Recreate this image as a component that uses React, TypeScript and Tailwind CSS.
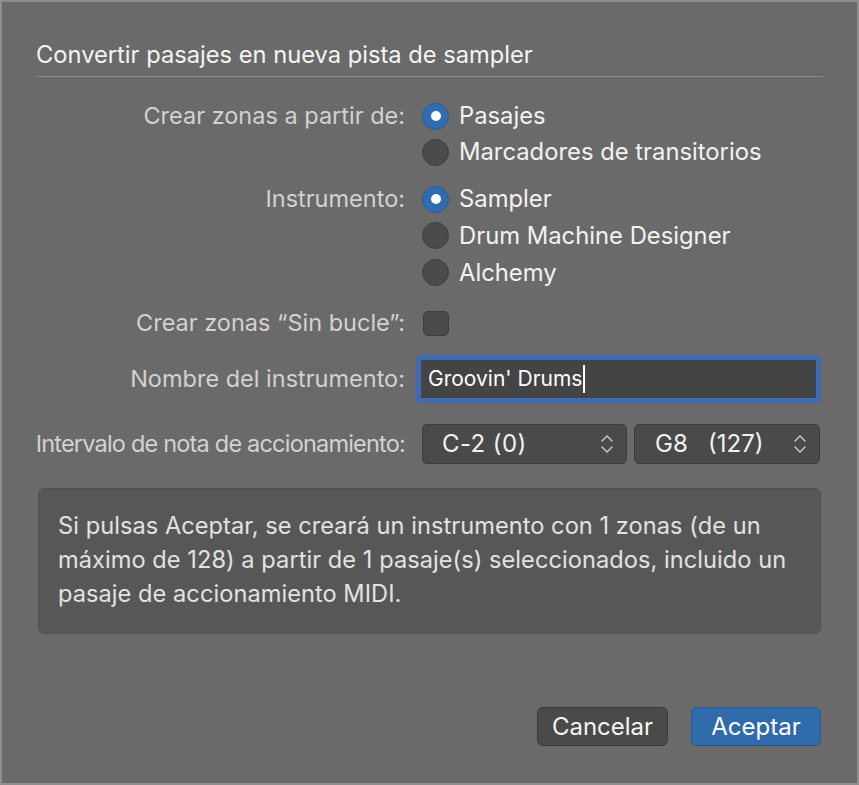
import React from "react";

const font = { fontFamily: "Inter, 'Liberation Sans', sans-serif" };

const Radio = ({ checked, label, h = "h-[36px]" }: { checked?: boolean; label: string; h?: string }) => (
  <div className={`flex ${h} items-center gap-[10px]`}>
    {checked ? (
      <div className="flex h-[27px] w-[27px] items-center justify-center rounded-full border border-[#285d99] bg-[#2f6cb0]">
        <div className="h-[10px] w-[10px] rounded-full bg-white" />
      </div>
    ) : (
      <div className="h-[27px] w-[27px] rounded-full border border-[#404040] bg-[#4b4b4b]" />
    )}
    <span className="text-[23.8px] text-[#f2f2f2]">{label}</span>
  </div>
);

const Chevrons = () => (
  <svg width="14" height="22" viewBox="0 0 14 22" fill="none" stroke="#cfcfcf" strokeWidth="1.4" strokeLinecap="round" strokeLinejoin="round">
    <path d="M2 8 L7 3 L12 8" />
    <path d="M2 14 L7 19 L12 14" />
  </svg>
);

const Label = ({ children, tight }: { children: React.ReactNode; tight?: boolean }) => (
  <div
    className={`w-[403px] shrink-0 whitespace-nowrap text-right text-[23.5px] text-[#d2d2d2] ${tight ? "tracking-[-0.8px]" : ""}`}
  >
    {children}
  </div>
);

export default function App() {
  return (
    <div
      style={font}
      className="flex h-[785px] w-[859px] flex-col border-[2px] border-[#8e8e8e] bg-[#6a6a6a]"
    >
      <div className="mx-[34px] mt-[39px] border-b border-[#8a8a8a] pb-[7px] text-[23.7px] leading-[28px] text-[#f4f4f4]">
        Convertir pasajes en nueva pista de sampler
      </div>

      <div className="mt-[21px] flex flex-col">
        <div className="flex">
          <Label><div className="h-[36px] leading-[36px]">Crear zonas a partir de:</div></Label>
          <div className="ml-[17px] flex flex-col">
            <Radio checked label="Pasajes" />
            <Radio label="Marcadores de transitorios" />
          </div>
        </div>

        <div className="mt-[11px] flex">
          <Label><div className="h-[36px] leading-[36px]">Instrumento:</div></Label>
          <div className="ml-[17px] flex flex-col">
            <Radio checked label="Sampler" />
            <Radio label="Drum Machine Designer" h="h-[37px]" />
            <Radio label="Alchemy" h="h-[37px]" />
          </div>
        </div>

        <div className="mt-[14px] flex h-[36px] items-center">
          <Label>Crear zonas “Sin bucle”:</Label>
          <div className="ml-[18px] h-[25px] w-[26px] rounded-[5px] border border-[#3e3e3e] bg-[#4b4b4b]" />
        </div>

        <div className="mt-[14px] flex h-[48px] items-center">
          <Label>Nombre del instrumento:</Label>
          <div className="ml-[11px] flex h-[48px] w-[405px] items-center rounded-[5px] border-[5px] border-[#3f6bb5] bg-[#444444] pl-[7px]">
            <span className="text-[21px] text-white">Groovin' Drums</span>
            <span className="ml-[1px] h-[28px] w-[1.5px] bg-white" />
          </div>
        </div>

        <div className="mt-[21px] flex h-[40px] items-center">
          <Label tight>Intervalo de nota de accionamiento:</Label>
          <div className="ml-[17px] flex gap-[7px]">
            <div className="flex h-[40px] w-[205px] items-center justify-between rounded-[5px] border border-[#3c3c3c] bg-[#4a4a4a] pl-[19px] pr-[12px]">
              <span className="text-[24px] tracking-[0.4px] text-[#f2f2f2]">C-2 (0)</span>
              <Chevrons />
            </div>
            <div className="flex h-[40px] w-[186px] items-center justify-between rounded-[5px] border border-[#3c3c3c] bg-[#4a4a4a] pl-[20px] pr-[12px]">
              <span className="whitespace-pre text-[24px] text-[#f2f2f2]">G8   (127)</span>
              <Chevrons />
            </div>
          </div>
        </div>
      </div>

      <div className="mx-[36px] mt-[24px] h-[146px] rounded-[6px] border border-[#525252] bg-[#575757] px-[19px] pt-[20px]">
        <p className="text-[23.6px] leading-[34px] tracking-[0.05px] text-[#e2e2e2]">
          Si pulsas Aceptar, se creará un instrumento con 1 zonas (de un máximo de 128) a partir de 1 pasaje(s) seleccionados, incluido un pasaje de accionamiento MIDI.
        </p>
      </div>

      <div className="mr-[36px] mt-[73px] flex justify-end gap-[23px]">
        <button className="h-[39px] w-[131px] rounded-[6px] border border-[#3a3a3a] bg-[#4a4a4a] text-[24px] text-[#f4f4f4]">
          Cancelar
        </button>
        <button className="h-[39px] w-[130px] rounded-[6px] border border-[#2a5a93] bg-[#2f6aaa] text-[24px] text-white">
          Aceptar
        </button>
      </div>
    </div>
  );
}
